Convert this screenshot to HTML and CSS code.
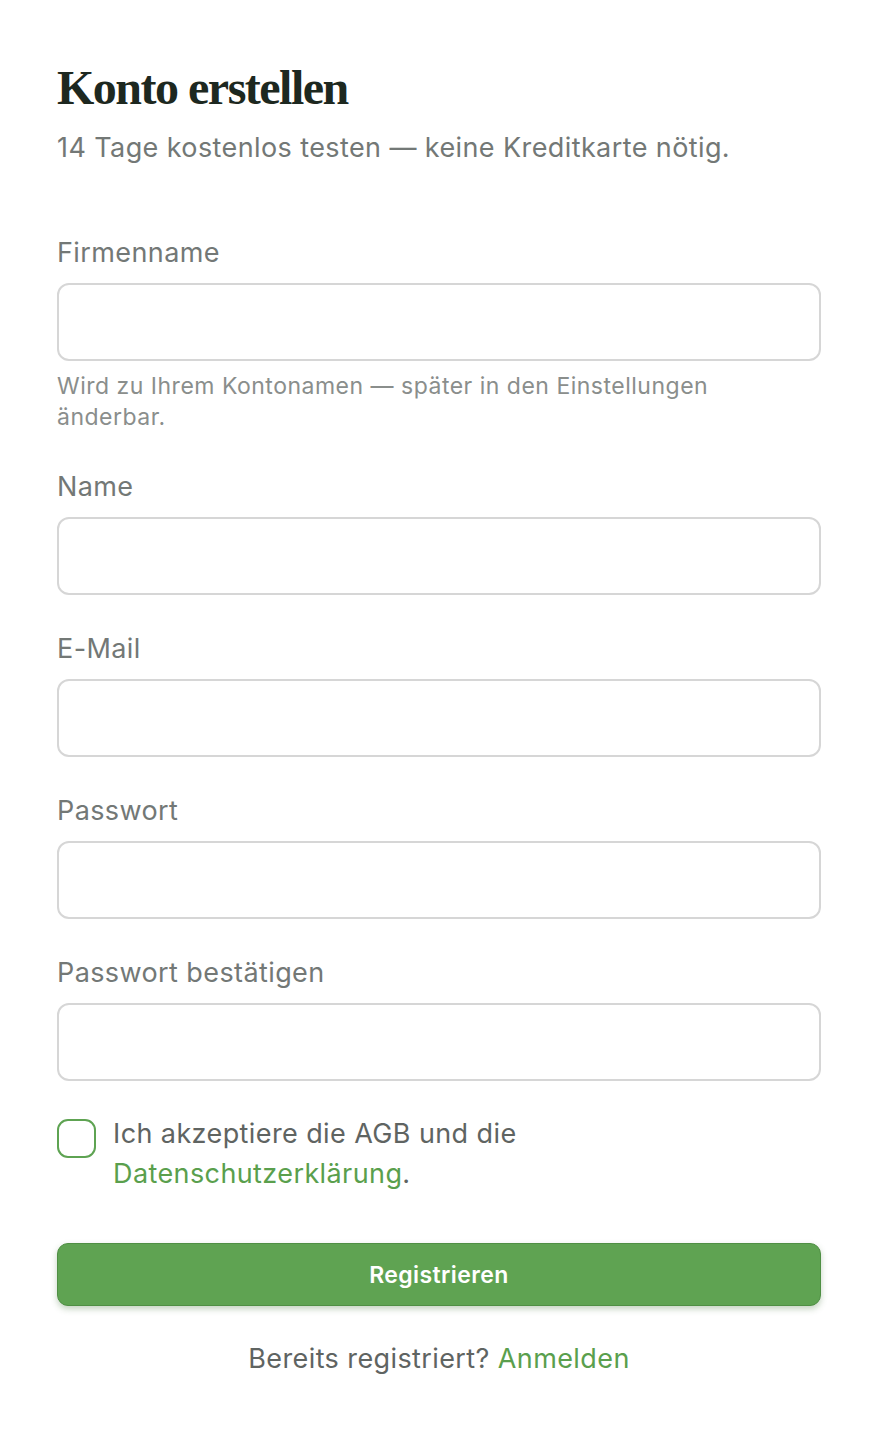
FILE: index.html
```html
<!DOCTYPE html>
<html lang="de">
<head>
    <meta charset="UTF-8">
    <meta name="viewport" content="width=device-width, initial-scale=1.0">
    <title>Konto erstellen</title>
    <link rel="stylesheet" href="styles.css">
</head>
<body>
    <main class="signup">
        <h1 class="title">Konto erstellen</h1>
        <p class="subtitle">14 Tage kostenlos testen — keine Kreditkarte nötig.</p>

        <form class="form" onsubmit="return false">
            <div class="field">
                <label class="label" for="company">Firmenname</label>
                <input class="input" id="company" type="text">
                <p class="hint">Wird zu Ihrem Kontonamen — später in den Einstellungen änderbar.</p>
            </div>

            <div class="field">
                <label class="label" for="name">Name</label>
                <input class="input" id="name" type="text">
            </div>

            <div class="field">
                <label class="label" for="email">E-Mail</label>
                <input class="input" id="email" type="email">
            </div>

            <div class="field">
                <label class="label" for="password">Passwort</label>
                <input class="input" id="password" type="password">
            </div>

            <div class="field">
                <label class="label" for="password2">Passwort bestätigen</label>
                <input class="input" id="password2" type="password">
            </div>

            <label class="terms">
                <input class="checkbox" type="checkbox">
                <span class="terms-text">Ich akzeptiere die AGB und die <a href="#" class="link">Datenschutzerklärung</a>.</span>
            </label>

            <button class="submit" type="submit">Registrieren</button>
        </form>

        <p class="login">Bereits registriert? <a href="#" class="link">Anmelden</a></p>
    </main>
</body>
</html>
```

FILE: styles.css
```css
body {
    margin: 0;
    padding: 0;
    background: #fff;
    font-family: Inter, "Noto Sans", sans-serif;
    color: #6c716f;
}

.signup {
    width: 764px;
    margin: 0 0 0 57px;
    padding-top: 60px;
}

.title {
    margin: 0;
    font-family: "Liberation Serif", "DejaVu Serif", serif;
    font-weight: bold;
    font-size: 48px;
    line-height: 56px;
    letter-spacing: -1.5px;
    color: #1d2820;
}

.subtitle {
    margin: 14px 0 0;
    font-size: 27px;
    line-height: 36px;
    letter-spacing: 0.4px;
    color: #737876;
}

.form {
    margin-top: 69px;
}

.field {
    margin-bottom: 36px;
}

.label {
    display: block;
    font-size: 27px;
    line-height: 36px;
    letter-spacing: 0.4px;
    color: #737876;
    margin-bottom: 12px;
}

.input {
    display: block;
    width: 100%;
    height: 78px;
    box-sizing: border-box;
    border: 2px solid #d6d6d6;
    border-radius: 12px;
    background: #fff;
    font-family: inherit;
    font-size: 24px;
    padding: 0 18px;
    outline: none;
}

.hint {
    margin: 10px 0 0;
    max-width: 720px;
    font-size: 23px;
    line-height: 31px;
    letter-spacing: 0.5px;
    color: #8a8e8c;
}

.terms {
    display: flex;
    align-items: flex-start;
    gap: 17px;
    margin-top: -3px;
    cursor: pointer;
}

.checkbox {
    appearance: none;
    -webkit-appearance: none;
    flex: none;
    width: 39px;
    height: 39px;
    margin: 5px 0 0;
    box-sizing: border-box;
    border: 2px solid #5ea352;
    border-radius: 11px;
    background: #fff;
}

.terms-text {
    max-width: 620px;
    font-size: 27px;
    line-height: 40px;
    letter-spacing: 0.4px;
    color: #5f6462;
}

.link {
    color: #5a9f4d;
    text-decoration: none;
}

.submit {
    display: block;
    width: 100%;
    height: 63px;
    margin-top: 49px;
    border: 1px solid #4f8f44;
    border-radius: 11px;
    background: #5fa352;
    color: #fff;
    font-family: inherit;
    font-size: 23px;
    font-weight: 600;
    letter-spacing: 0.4px;
    box-shadow: 0 3px 6px rgba(60, 110, 50, 0.3);
    cursor: pointer;
}

.login {
    margin: 35px 0 0;
    text-align: center;
    font-size: 27px;
    line-height: 36px;
    letter-spacing: 0.4px;
    color: #5f6462;
}
```
